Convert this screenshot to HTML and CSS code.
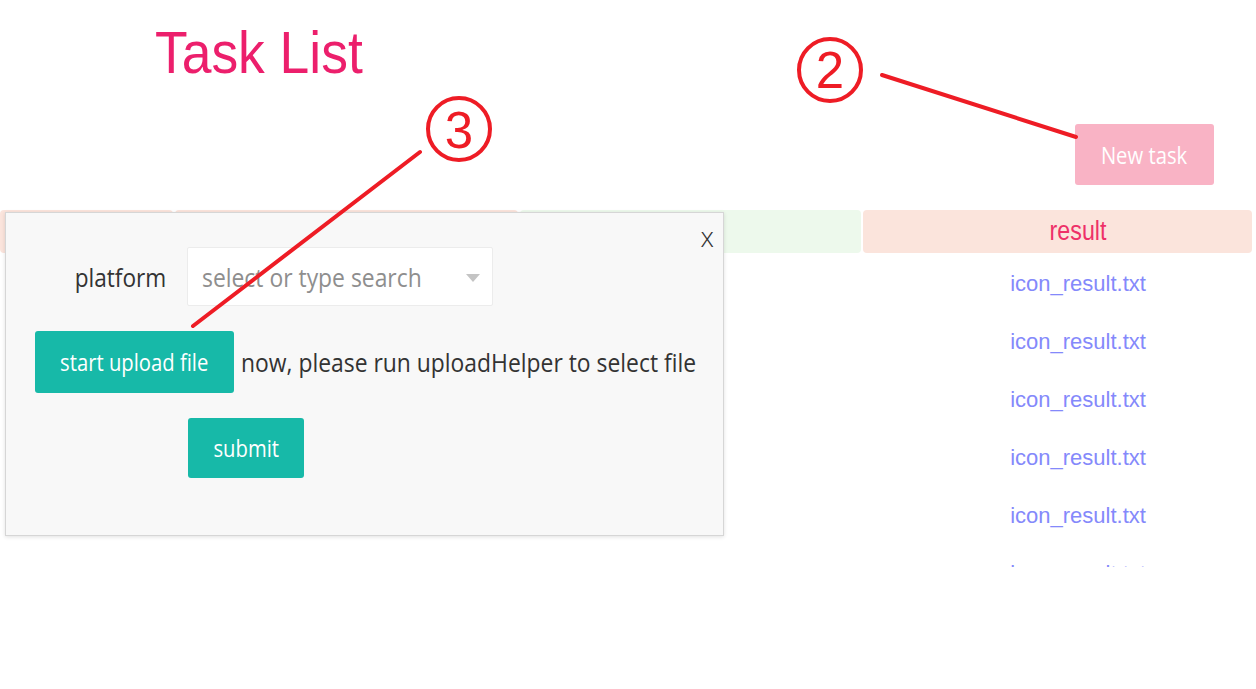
FILE: index.html
```html
<!DOCTYPE html>
<html lang="en">
<head>
<meta charset="utf-8">
<title>Task List</title>
<link rel="stylesheet" href="styles.css">
</head>
<body>
<div class="page">
  <h1 class="title"><span>Task List</span></h1>
  <div class="toolbar">
    <button class="btn-new"><span>New task</span></button>
  </div>
  <div class="table">
    <div class="th"></div>
    <div class="th"></div>
    <div class="th green"></div>
    <div class="th result"><span>result</span></div>

    <div class="td"></div><div class="td"></div><div class="td"></div><div class="td file">icon_result.txt</div>
    <div class="td"></div><div class="td"></div><div class="td"></div><div class="td file">icon_result.txt</div>
    <div class="td"></div><div class="td"></div><div class="td"></div><div class="td file">icon_result.txt</div>
    <div class="td"></div><div class="td"></div><div class="td"></div><div class="td file">icon_result.txt</div>
    <div class="td"></div><div class="td"></div><div class="td"></div><div class="td file">icon_result.txt</div>
    <div class="td"></div><div class="td"></div><div class="td"></div><div class="td file">icon_result.txt</div>
  </div>

  <div class="dialog">
    <span class="close">x</span>
    <div class="form">
      <div class="row">
        <label class="lbl"><span>platform</span></label>
        <div class="select">
          <span class="placeholder">select or type search</span>
          <i class="caret"></i>
        </div>
      </div>
      <div class="row">
        <button class="btn teal upload"><span>start upload file</span></button>
        <span class="note">now, please run uploadHelper to select file</span>
      </div>
      <div class="row">
        <button class="btn teal submit"><span>submit</span></button>
      </div>
    </div>
  </div>

  <svg class="marks" width="1256" height="689" viewBox="0 0 1256 689">
    <circle cx="830" cy="70" r="31" fill="none" stroke="#ee1c25" stroke-width="4"/>
    <text x="830" y="88" text-anchor="middle" font-size="51" fill="#ee1c25" font-family="Liberation Sans, Arial, sans-serif">2</text>
    <line x1="882" y1="75" x2="1076" y2="137" stroke="#ee1c25" stroke-width="4" stroke-linecap="round"/>
    <circle cx="459" cy="129" r="31" fill="none" stroke="#ee1c25" stroke-width="4"/>
    <text x="459" y="148" text-anchor="middle" font-size="51" fill="#ee1c25" font-family="Liberation Sans, Arial, sans-serif">3</text>
    <line x1="420" y1="152" x2="193" y2="326" stroke="#ee1c25" stroke-width="4" stroke-linecap="round"/>
  </svg>
</div>
</body>
</html>
```

FILE: styles.css
```css
* { box-sizing: border-box; }
html, body { margin: 0; padding: 0; background: #fff; }
body {
  font-family: "Liberation Sans", Arial, sans-serif;
  width: 1256px;
  height: 689px;
  overflow: hidden;
}
.page { position: relative; width: 1256px; height: 689px; }

.title {
  margin: 0;
  padding: 24px 0 0 155px;
  font-size: 59px;
  line-height: 59px;
  font-weight: normal;
  color: #ec1f6c;
}
.title span { display: inline-block; transform: scaleX(0.905); transform-origin: left center; }

.toolbar { display: flex; justify-content: flex-end; padding: 41px 42px 0 0; }
.btn-new {
  width: 139px;
  height: 61px;
  border: 0;
  border-radius: 3px;
  background: #f9b3c5;
  color: #fff;
  font-family: "Open Sans", sans-serif;
  font-size: 23px;
  display: flex;
  align-items: center;
  justify-content: center;
  padding: 0;
}
.btn-new span, .btn span { display: inline-block; transform: scaleX(0.88); }

.table {
  margin-top: 25px;
  width: 1252px;
  height: 357px;
  overflow: hidden;
  display: grid;
  grid-template-columns: 173px 343px 341px 389px;
  grid-template-rows: 43px;
  grid-auto-rows: 58px;
  column-gap: 2px;
}
.th { background: #fbe4dc; border-radius: 4px; }
.th.green { background: #edf9ec; }
.th.result {
  display: flex;
  align-items: center;
  justify-content: center;
  padding-left: 41px;
  color: #ee3068;
  font-size: 27px;
}
.th.result span { display: inline-block; transform: scaleX(0.86); }
.td.file {
  display: flex;
  align-items: center;
  justify-content: center;
  padding: 4px 0 0 41px;
  font-size: 22px;
  color: #8489fb;
}

.dialog {
  position: absolute;
  left: 5px;
  top: 212px;
  width: 719px;
  height: 324px;
  border: 1px solid #d6d6d6;
  background: #f8f8f8;
  box-shadow: 0 1px 4px rgba(0, 0, 0, 0.12);
  font-family: "Open Sans", sans-serif;
  color: #333;
  padding-top: 34px;
}
.close {
  position: absolute;
  top: 10px;
  right: 9px;
  font-size: 27px;
  line-height: 27px;
  font-weight: 300;
  color: #333;
}
.form { display: flex; flex-direction: column; gap: 25px; }
.row { display: flex; align-items: center; }
.lbl {
  flex: 0 0 160px;
  margin-right: 21px;
  text-align: right;
  font-size: 26px;
}
.lbl span { display: inline-block; transform: scaleX(0.87); transform-origin: right center; }
.select {
  flex: 0 0 306px;
  height: 59px;
  background: #fff;
  border: 1px solid #ececec;
  border-radius: 2px;
  display: flex;
  align-items: center;
  justify-content: space-between;
  padding: 0 12px 0 14px;
}
.placeholder {
  display: inline-block;
  font-size: 26px;
  color: #8e8e8e;
  white-space: nowrap;
  transform: scaleX(0.88);
  transform-origin: left center;
}
.caret {
  width: 0;
  height: 0;
  border-left: 7px solid transparent;
  border-right: 7px solid transparent;
  border-top: 8px solid #c4c4c4;
  margin-top: 2px;
}
.btn {
  flex-shrink: 0;
  border: 0;
  border-radius: 3px;
  color: #fff;
  font-family: "Open Sans", sans-serif;
  font-size: 23px;
  display: flex;
  align-items: center;
  justify-content: center;
  padding: 0;
  white-space: nowrap;
}
.teal { background: #17b9a8; }
.upload { width: 199px; height: 62px; margin-left: 29px; }
.submit { width: 116px; height: 60px; margin-left: 182px; }
.note {
  display: inline-block;
  flex-shrink: 0;
  margin-left: 7px;
  font-size: 26px;
  white-space: nowrap;
  transform: scaleX(0.88);
  transform-origin: left center;
}

.marks { position: absolute; left: 0; top: 0; pointer-events: none; }
```
